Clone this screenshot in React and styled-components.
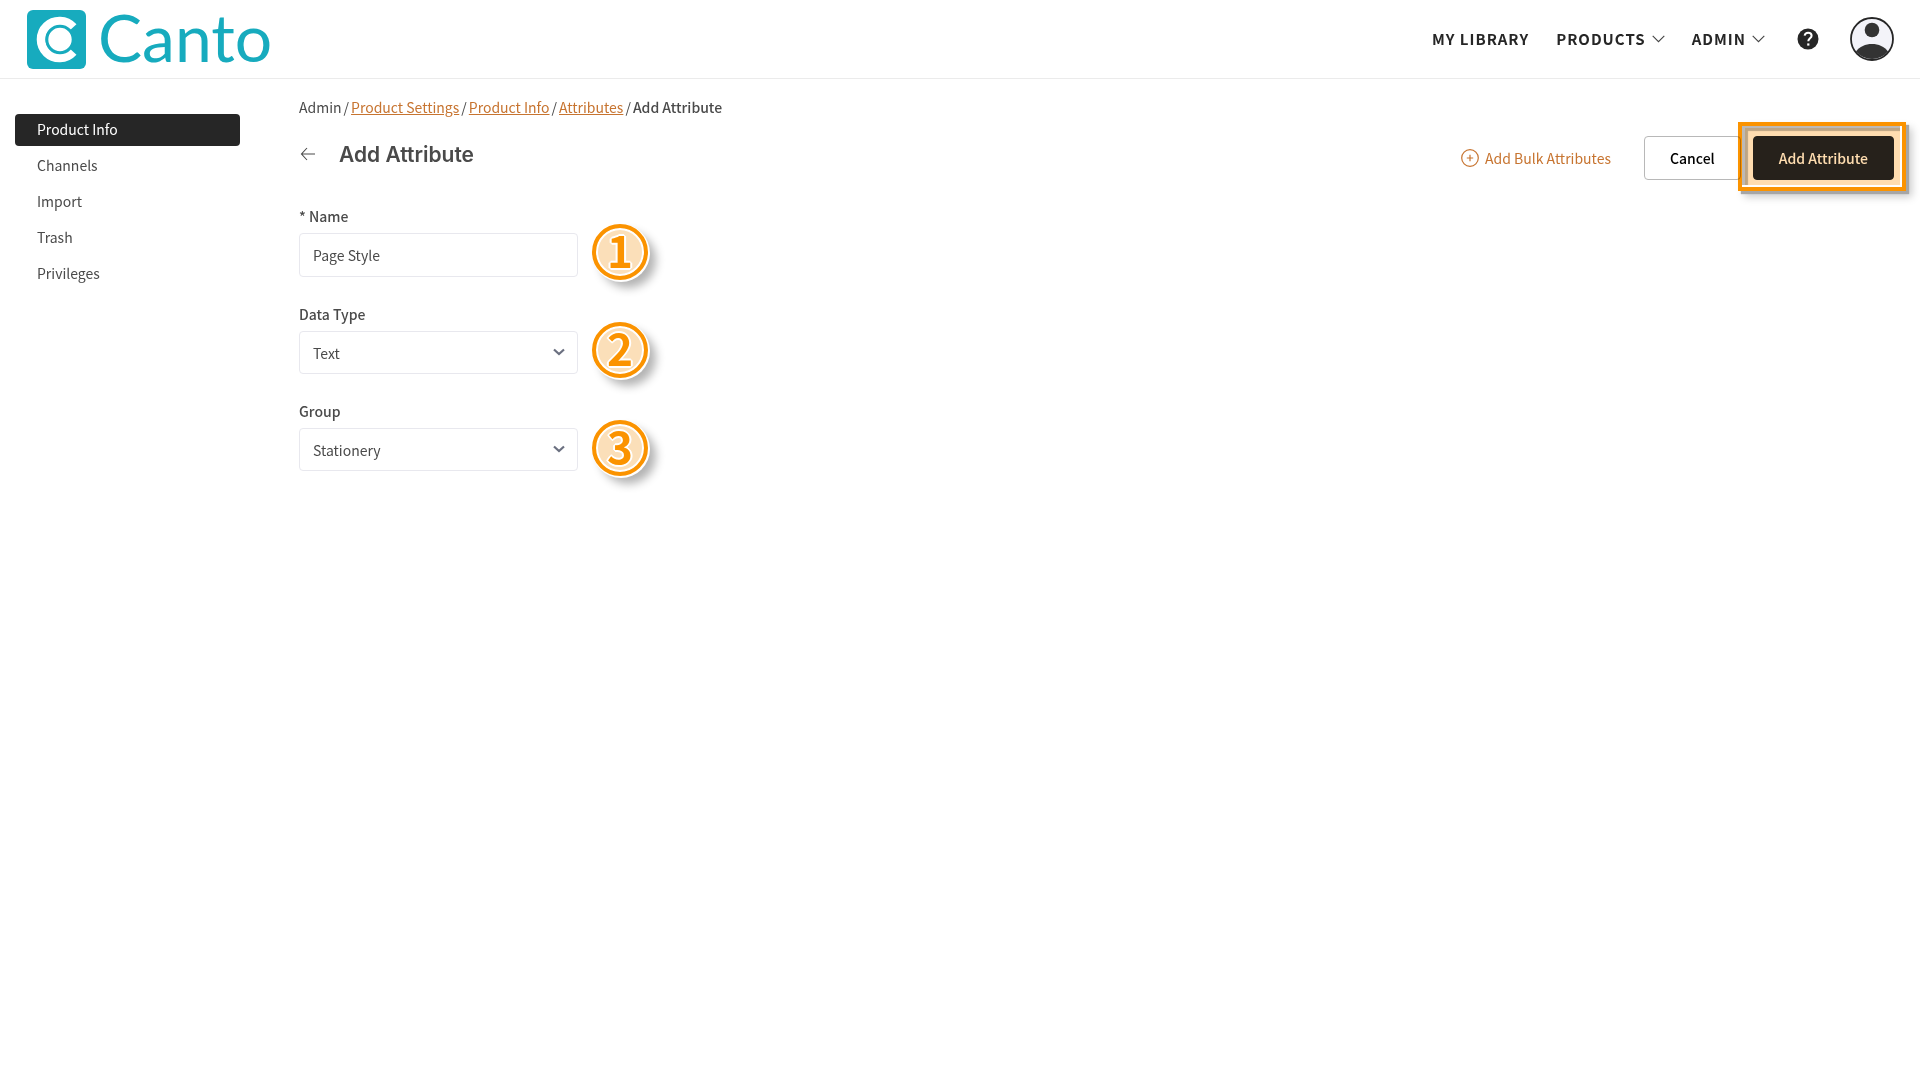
import React from "react";
import styled, { createGlobalStyle } from "styled-components";

const GlobalStyle = createGlobalStyle`
  * {
    box-sizing: border-box;
  }

  body {
    margin: 0;
    background: #fff;
    color: #4a4a4a;
    font-family: "Noto Sans CJK SC", "Noto Sans", sans-serif;
    font-size: 14px;
    line-height: 20px;
  }

  button,
  input,
  select {
    font: inherit;
  }
`;

const Page = styled.div`
  min-height: 100vh;
  background: #fff;
`;

const Header = styled.header`
  display: flex;
  align-items: center;
  justify-content: space-between;
  height: 79px;
  padding: 0 26px 0 27px;
  border-bottom: 1px solid #ebebeb;
`;

const Logo = styled.a`
  display: flex;
  align-items: center;
  gap: 12px;
  color: #17abbe;
  font-family: Lato, sans-serif;
  font-size: 66px;
  line-height: 64px;
  text-decoration: none;

  span {
    padding-bottom: 4px;
  }
`;

const Nav = styled.nav`
  display: flex;
  align-items: center;
`;

const NavLink = styled.a`
  display: flex;
  align-items: center;
  gap: 6px;
  margin-right: 27px;
  color: #262626;
  font-size: 15px;
  font-weight: 700;
  letter-spacing: 1px;
  text-decoration: none;
`;

const IconButton = styled.button`
  display: flex;
  padding: 0;
  border: 0;
  background: none;
  color: #262626;
  cursor: pointer;
`;

const Tools = styled.div`
  display: flex;
  align-items: center;
  gap: 31px;
  margin-left: 5px;
`;

const Layout = styled.div`
  display: flex;
  gap: 59px;
  padding: 0 26px 0 15px;
`;

const Sidebar = styled.nav`
  display: flex;
  flex-direction: column;
  flex: 0 0 225px;
  gap: 4px;
  padding-top: 35px;
`;

const SideLink = styled.a`
  padding: 5px 22px 7px;
  border-radius: 4px;
  background: ${({ $active }) => ($active ? "#262626" : "transparent")};
  color: ${({ $active }) => ($active ? "#fff" : "#4a4a4a")};
  text-decoration: none;
`;

const Main = styled.main`
  flex: 1;
  min-width: 0;
  padding-top: 18px;
`;

const Breadcrumb = styled.nav`
  display: flex;
  gap: 2px;

  a {
    color: #c77430;
  }

  strong {
    font-weight: 500;
  }
`;

const PageHead = styled.div`
  display: flex;
  align-items: flex-start;
  justify-content: space-between;
  margin-top: 19px;
`;

const TitleRow = styled.div`
  display: flex;
  align-items: center;
  gap: 23px;
  height: 36px;
  padding-left: 1px;
`;

const Title = styled.h1`
  margin: 0;
  padding-top: 2px;
  font-family: Inter, sans-serif;
  font-size: 21px;
  font-weight: 600;
  line-height: 28px;
`;

const Actions = styled.div`
  display: flex;
  align-items: center;
  gap: 12px;
`;

const BulkLink = styled.a`
  display: flex;
  align-items: center;
  gap: 6px;
  margin-right: 21px;
  color: #c77430;
  text-decoration: none;
`;

const Button = styled.button`
  height: 44px;
  padding: 0 25px;
  border: 1px solid ${({ $primary }) => ($primary ? "#262626" : "#b8b8b8")};
  border-radius: 4px;
  background: ${({ $primary }) => ($primary ? "#262626" : "#fff")};
  color: ${({ $primary }) => ($primary ? "#fff" : "#000")};
  font-weight: 500;
  cursor: pointer;
`;

const Highlighted = styled.div`
  position: relative;
`;

const Highlight = styled.span`
  position: absolute;
  inset: -14px -12px -11px -15px;
  border: 4px solid #fb9300;
  background: #ffddb0;
  box-shadow:
    inset -2px -2px 0 #fff,
    inset 3px 2px 0 #bdb9b5,
    inset 6px 5px 1px #bda584,
    3px 3px 1px #a6a6a6,
    6px 6px 8px #ccc;
  mix-blend-mode: multiply;
  pointer-events: none;
`;

const Form = styled.form`
  position: relative;
  display: flex;
  flex-direction: column;
  gap: 27px;
  width: 279px;
  margin-top: 26px;
`;

const Field = styled.div`
  position: relative;
  display: flex;
  flex-direction: column;
  gap: 7px;

  svg {
    position: absolute;
    right: 13px;
    bottom: 15px;
    pointer-events: none;
  }
`;

const Label = styled.label`
  font-weight: 500;
`;

const Input = styled.input`
  height: 44px;
  padding: 0 13px;
  border: 1px solid #e8e8ee;
  border-radius: 4px;
  background: #fff;
  color: #4a4a4a;
`;

const Select = styled.select`
  height: 43px;
  padding: 0 13px;
  border: 1px solid #e8e8ee;
  border-radius: 4px;
  background: #fff;
  color: #4a4a4a;
  appearance: none;
`;

const Steps = styled.div`
  position: absolute;
  top: 18px;
  left: 293px;
  display: flex;
  flex-direction: column;
  gap: 42px;
`;

const Step = styled.span`
  display: flex;
  align-items: center;
  justify-content: center;
  width: 56px;
  height: 56px;
  padding-bottom: 6px;
  border: 4px solid #fb9300;
  border-radius: 50%;
  background: #fbdfb9;
  box-shadow:
    inset 0 0 0 2px #fff,
    1px 1px 0 1px #fff,
    8px 8px 10px rgba(0, 0, 0, 0.3);
  color: #fb9300;
  font-size: 44px;
  font-weight: 700;
  line-height: 42px;
  text-shadow:
    -2px 0 #fff,
    2px 0 #fff,
    0 -2px #fff,
    0 2px #fff,
    -1px -1px #fff,
    1px -1px #fff,
    -1px 1px #fff,
    1px 1px #fff;
`;

const Chevron = () => (
  <svg width="13" height="8" viewBox="0 0 13 8" fill="none" aria-hidden="true">
    <path d="M0.7 0.9l5.8 5.8 5.8-5.8" stroke="#444" strokeWidth="1.1" />
  </svg>
);

const SelectArrow = () => (
  <svg width="12" height="14" viewBox="0 0 12 14" fill="none" aria-hidden="true">
    <path d="M1 4.5l5 4.6 5-4.6" stroke="#6b7080" strokeWidth="2.2" />
  </svg>
);

const LogoMark = () => (
  <svg width="59" height="59" viewBox="0 0 59 59" fill="none" aria-hidden="true">
    <rect width="59" height="59" rx="6" fill="#17abbe" />
    <path d="M46.2 17.2A18.4 18.4 0 1 0 46.2 41.8" stroke="#fff" strokeWidth="8.8" />
    <circle cx="33" cy="29.5" r="13.2" fill="#fff" stroke="#17abbe" strokeWidth="3" />
  </svg>
);

const sideLinks = ["Product Info", "Channels", "Import", "Trash", "Privileges"];
const crumbs = ["Product Settings", "Product Info", "Attributes"];

const App = () => {
  return (
    <Page>
      <GlobalStyle />
      <Header>
        <Logo href="#">
          <LogoMark />
          <span>Canto</span>
        </Logo>
        <Nav>
          <NavLink href="#">MY LIBRARY</NavLink>
          <NavLink href="#">
            PRODUCTS <Chevron />
          </NavLink>
          <NavLink href="#">
            ADMIN <Chevron />
          </NavLink>
          <Tools>
            <IconButton aria-label="Help">
              <svg width="22" height="22" viewBox="0 0 22 22" fill="none">
                <circle cx="11" cy="11" r="10.5" fill="currentColor" />
                <path
                  d="M7.6 7.6c.4-1.8 1.7-2.9 3.500-2.900 2 0 3.500 1.200 3.500 3 0 2.600-3.300 2.700-3.300 5.600"
                  stroke="#fff"
                  strokeWidth="2"
                />
                <rect x="10.2" y="15.4" width="2.2" height="2.2" fill="#fff" />
              </svg>
            </IconButton>
            <IconButton aria-label="Account">
              <svg width="44" height="44" viewBox="0 0 44 44" fill="none">
                <circle cx="22" cy="22" r="21" fill="#f3f3f9" />
                <circle cx="22" cy="13" r="7.3" fill="#333" />
                <path d="M6 34.5C9.5 29.5 15.5 27 22 27s12.5 2.5 16 7.5A21 21 0 0 1 6 34.5z" fill="#333" />
                <circle cx="22" cy="22" r="21" stroke="#262626" strokeWidth="1.8" />
              </svg>
            </IconButton>
          </Tools>
        </Nav>
      </Header>

      <Layout>
        <Sidebar>
          {sideLinks.map((item, idx) => (
            <SideLink href="#" key={item} $active={idx === 0}>
              {item}
            </SideLink>
          ))}
        </Sidebar>

        <Main>
          <Breadcrumb>
            <span>Admin</span>
            <span>/</span>
            {crumbs.map((item) => (
              <React.Fragment key={item}>
                <a href="#">{item}</a>
                <span>/</span>
              </React.Fragment>
            ))}
            <strong>Add Attribute</strong>
          </Breadcrumb>

          <PageHead>
            <TitleRow>
              <IconButton aria-label="Back">
                <svg width="16" height="14" viewBox="0 0 16 14" fill="none">
                  <path d="M15 7H1.5M7 1L1.5 7 7 13" stroke="#4a4a4a" strokeWidth="1.1" />
                </svg>
              </IconButton>
              <Title>Add Attribute</Title>
            </TitleRow>
            <Actions>
              <BulkLink href="#">
                <svg width="18" height="18" viewBox="0 0 18 18" fill="none" stroke="currentColor">
                  <circle cx="9" cy="9" r="8.3" strokeWidth="1.2" />
                  <path d="M9 5.8v6.4M5.8 9h6.4" strokeWidth="1.2" />
                </svg>
                Add Bulk Attributes
              </BulkLink>
              <Button type="button">Cancel</Button>
              <Highlighted>
                <Button type="submit" form="attribute" $primary>
                  Add Attribute
                </Button>
                <Highlight />
              </Highlighted>
            </Actions>
          </PageHead>

          <Form id="attribute">
            <Field>
              <Label htmlFor="name">* Name</Label>
              <Input id="name" defaultValue="Page Style" />
            </Field>
            <Field>
              <Label htmlFor="type">Data Type</Label>
              <Select id="type">
                <option>Text</option>
              </Select>
              <SelectArrow />
            </Field>
            <Field>
              <Label htmlFor="group">Group</Label>
              <Select id="group">
                <option>Stationery</option>
              </Select>
              <SelectArrow />
            </Field>
            <Steps>
              <Step>1</Step>
              <Step>2</Step>
              <Step>3</Step>
            </Steps>
          </Form>
        </Main>
      </Layout>
    </Page>
  );
};

export default App;
